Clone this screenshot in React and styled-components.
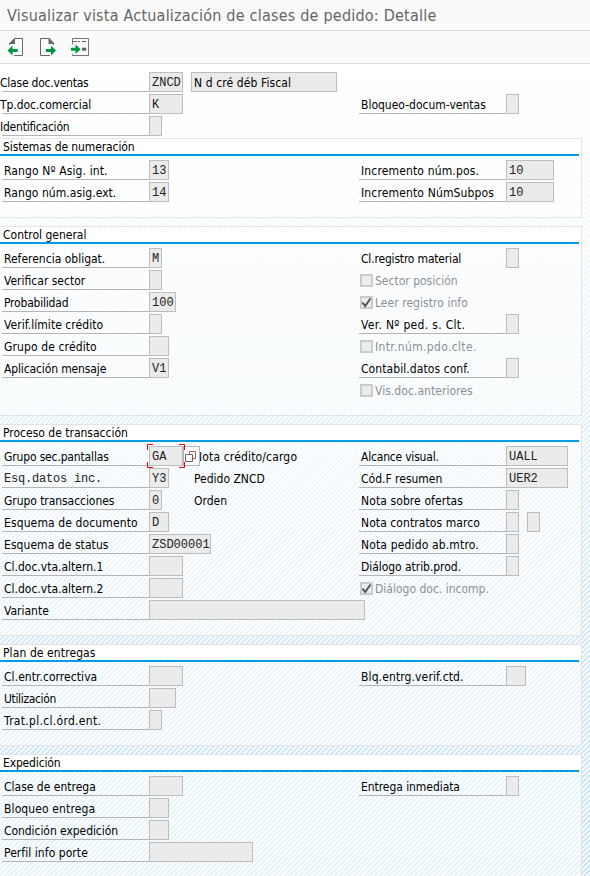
import React from "react";
import styled, { createGlobalStyle, css } from "styled-components";

const Global = createGlobalStyle`
  * { box-sizing: border-box; }
  html, body { margin: 0; padding: 0; }
  body {
    width: 590px;
    height: 876px;
    overflow: hidden;
    background: #fff;
    font-family: "DejaVu Sans Condensed", "DejaVu Sans", sans-serif;
    font-stretch: condensed;
    font-size: 12px;
    color: #000;
  }
`;

const Page = styled.main`
  display: flex;
  flex-direction: column;
  width: 590px;
  height: 876px;
  overflow: hidden;
`;

const TitleBar = styled.h1`
  margin: 0;
  height: 31px;
  padding-left: 7px;
  border-bottom: 1px solid #dcdcdc;
  background: #fafafa;
  color: #666;
  font-size: 16px;
  font-weight: 400;
  line-height: 31px;
  letter-spacing: 0.215px;
  white-space: nowrap;
`;

const Toolbar = styled.nav`
  display: flex;
  flex: none;
  align-items: flex-start;
  gap: 12px;
  height: 33px;
  padding: 6px 0 0 6px;
  border-bottom: 1px solid #dcdcdc;
  background: #fafafa;
`;

const ToolButton = styled.button`
  display: block;
  width: 20px;
  height: 20px;
  padding: 0;
  border: 0;
  background: none;
  svg { display: block; }
`;

const Workspace = styled.section`
  flex: 1;
  min-height: 0;
  padding-top: 8px;
  background:
    linear-gradient(#fff 0%, rgba(255, 255, 255, 0.8) 20%, rgba(255, 255, 255, 0.25) 65%, rgba(255, 255, 255, 0) 100%),
    linear-gradient(135deg, #cde5f5 0 25%, #fff 25% 50%, #cde5f5 50% 75%, #fff 75%) 0 0 / 5px 5px;
`;

const Columns = styled.div`
  display: grid;
  grid-template-columns: 357px 1fr;
  padding-left: 2px;
`;

const HeaderColumns = styled(Columns)`
  height: 66px;
`;

const Group = styled.section`
  width: 582px;
  height: ${(p) => p.$height}px;
  margin-bottom: 8px;
  border: 1px solid #e2e4e5;
  border-left: 0;
  background: rgba(255, 255, 255, 0.55);
`;

const GroupTitle = styled.h2`
  width: 579px;
  height: 17px;
  margin: 0 0 4px;
  padding-left: 3px;
  border-bottom: 2px solid #009de0;
  background: #fff;
  box-shadow: 2px 0 #fff;
  font-size: 12px;
  font-weight: 400;
  line-height: 17px;
  letter-spacing: ${(p) => p.$track || 0}px;
`;

const Row = styled.div`
  display: flex;
  height: 20px;
  margin-bottom: 2px;
  white-space: nowrap;
`;

const Label = styled.span`
  flex: none;
  width: 147px;
  height: 20px;
  padding-left: 2px;
  border-bottom: 1px solid ${(p) => (p.$plain ? "transparent" : "#b5b5b5")};
  line-height: 23px;
  ${(p) => p.$mono && css`
    color: #222;
    font-family: "Liberation Mono", monospace;
    line-height: 22px;
  `}
`;

const LabelText = styled.span`
  display: inline-block;
  margin-left: ${(p) => (p.$outdent ? -p.$outdent : 0)}px;
  letter-spacing: ${(p) => p.$track || 0}px;
`;

const Field = styled.span`
  position: relative;
  flex: none;
  width: ${(p) => p.$width}px;
  height: 20px;
  margin-left: ${(p) => p.$gap || 0}px;
  padding-left: 2px;
  border: 1px solid #bdbdbd;
  background: #ebebeb;
  color: #222;
  font-family: "Liberation Mono", monospace;
  line-height: 20px;
`;

const TextField = styled(Field)`
  color: #000;
  font-family: inherit;
  line-height: 21px;
  letter-spacing: 0.1px;
`;

const Description = styled.span`
  margin-left: ${(p) => p.$gap}px;
  line-height: 23px;
  letter-spacing: ${(p) => p.$track || 0}px;
`;

const FocusCorners = styled.svg`
  position: absolute;
  left: -3px;
  top: -3px;
`;

const MatchButton = styled.button`
  position: absolute;
  left: 33px;
  top: -1px;
  width: 17px;
  height: 20px;
  padding: 0;
  border: 1px solid #b5b5b5;
  background: #f9fbfc;
  svg { display: block; }
`;

const Check = styled.div`
  display: flex;
  align-items: center;
  height: 20px;
  margin-bottom: 2px;
  padding-left: 1px;
  gap: 2px;
  color: #8b9095;
  line-height: 20px;
  letter-spacing: ${(p) => p.$track || 0}px;
  white-space: nowrap;
`;

const CheckText = styled.span`
  padding-top: 2px;
`;

const Box = styled.span`
  width: 13px;
  height: 13px;
  margin-top: 1px;
  border: 2px solid #cbcbcb;
  background: #e9eef1;
  svg { display: block; margin: -1px; }
`;

const Blank = styled.div`
  height: 22px;
`;

function PreviousIcon() {
  return (
    <svg width="20" height="20" viewBox="0 0 20 20" fill="none">
      <path d="M3.5 8V6.5L8.5 1.5H16.5V18.5H8" stroke="#666" />
      <path d="M3 7L9 1V7Z" fill="#666" />
      <path d="M1.5 13.5L6.5 8.5V12H11.7V15H6.5V18.5Z" fill="#009640" />
    </svg>
  );
}

function NextIcon() {
  return (
    <svg width="20" height="20" viewBox="0 0 20 20" fill="none">
      <path d="M12 18.5H2.5V1.5H11.5L15.5 6V8" stroke="#666" />
      <path d="M10.5 1L16 7H10.5Z" fill="#666" />
      <path d="M18 13.5L13 8.5V12H8V15H13V18.5Z" fill="#009640" />
    </svg>
  );
}

function DetailIcon() {
  return (
    <svg width="20" height="20" viewBox="0 0 20 20" fill="none">
      <path d="M2.5 7.5V1.5H18.5V18.5H2.5V17" stroke="#777" />
      <path d="M3 4.5H7M8 4.5H10M12 4.5H16" stroke="#666" />
      <path d="M12 12.2H16.3" stroke="#666" strokeWidth="3" />
      <path d="M1 10.8H5.5V7.5L10.7 12.2L5.5 17V13.7H1Z" fill="#009640" />
    </svg>
  );
}

function Entry({ label, width, value, track, plain, mono, outdent, children }) {
  return (
    <Row>
      <Label $plain={plain} $mono={mono}>
        <LabelText $track={track} $outdent={outdent}>{label}</LabelText>
      </Label>
      <Field $width={width}>{value}</Field>
      {children}
    </Row>
  );
}

function CheckEntry({ label, checked, track }) {
  return (
    <Check $track={track}>
      <Box>
        {checked && (
          <svg width="11" height="11" viewBox="0 0 11 11" fill="none">
            <path d="M1.5 5.5L4.2 9L9.5 1.5" stroke="#555" strokeWidth="2" />
          </svg>
        )}
      </Box>
      <CheckText>{label}</CheckText>
    </Check>
  );
}

function FocusedEntry() {
  return (
    <Row>
      <Label><LabelText $track={-0.15}>Grupo sec.pantallas</LabelText></Label>
      <Field $width={34}>
        GA
        <MatchButton aria-label="Ayuda">
          <svg width="15" height="18" viewBox="0 0 15 18" fill="none">
            <path d="M5.5 7V4.5H11.5V11.5H9" stroke="#b0623c" />
            <path d="M1.5 7.5H8.5V14.5H1.5Z" stroke="#666" fill="#fff" />
          </svg>
        </MatchButton>
        <FocusCorners width="38" height="24" viewBox="0 0 38 24" fill="none" stroke="#e0000c">
          <path d="M.5 6V.5H6M32 .5H37.5V6M.5 18V23.5H6M32 23.5H37.5V18" />
        </FocusCorners>
      </Field>
      <Description $gap={11} $track={0.16}>Nota crédito/cargo</Description>
    </Row>
  );
}

export default function App() {
  return (
    <Page>
      <Global />
      <TitleBar>Visualizar vista Actualización de clases de pedido: Detalle</TitleBar>
      <Toolbar>
        <ToolButton aria-label="Anterior"><PreviousIcon /></ToolButton>
        <ToolButton aria-label="Siguiente"><NextIcon /></ToolButton>
        <ToolButton aria-label="Detalle"><DetailIcon /></ToolButton>
      </Toolbar>
      <Workspace>
        <HeaderColumns>
          <div>
            <Entry outdent={4} track={-0.22} label="Clase doc.ventas" width={34} value="ZNCD">
              <TextField $width={146} $gap={8}>N d cré déb Fiscal</TextField>
            </Entry>
            <Entry outdent={4} track={-0.06} label="Tp.doc.comercial" width={34} value="K" />
            <Entry outdent={4} track={-0.22} label="Identificación" width={13} />
          </div>
          <div>
            <Blank />
            <Entry label="Bloqueo-docum-ventas" width={13} />
          </div>
        </HeaderColumns>

        <Group $height={80}>
          <GroupTitle $track={-0.1}>Sistemas de numeración</GroupTitle>
          <Columns>
            <div>
              <Entry track={0.12} label="Rango Nº Asig. int." width={20} value="13" />
              <Entry track={0.06} label="Rango núm.asig.ext." width={20} value="14" />
            </div>
            <div>
              <Entry track={0.15} label="Incremento núm.pos." width={48} value="10" />
              <Entry track={0.15} label="Incremento NúmSubpos" width={48} value="10" />
            </div>
          </Columns>
        </Group>

        <Group $height={190}>
          <GroupTitle>Control general</GroupTitle>
          <Columns>
            <div>
              <Entry label="Referencia obligat." width={13} value="M" />
              <Entry label="Verificar sector" width={13} />
              <Entry track={-0.2} label="Probabilidad" width={27} value="100" />
              <Entry track={0.05} label="Verif.límite crédito" width={13} />
              <Entry track={0.12} label="Grupo de crédito" width={20} />
              <Entry track={-0.13} label="Aplicación mensaje" width={20} value="V1" />
            </div>
            <div>
              <Entry plain track={-0.18} label="Cl.registro material" width={13} />
              <CheckEntry label="Sector posición" />
              <CheckEntry checked track={0.05} label="Leer registro info" />
              <Entry track={0.32} label="Ver. Nº ped. s. Clt." width={13} />
              <CheckEntry track={0.35} label="Intr.núm.pdo.clte." />
              <Entry track={0.08} label="Contabil.datos conf." width={13} />
              <CheckEntry track={0.05} label="Vis.doc.anteriores" />
            </div>
          </Columns>
        </Group>

        <Group $height={212}>
          <GroupTitle>Proceso de transacción</GroupTitle>
          <Columns>
            <div>
              <FocusedEntry />
              <Entry mono track={-0.2} label="Esq.datos inc." width={20} value="Y3">
                <Description $gap={25}>Pedido ZNCD</Description>
              </Entry>
              <Entry track={-0.06} label="Grupo transacciones" width={13} value="0">
                <Description $gap={32}>Orden</Description>
              </Entry>
              <Entry track={0.12} label="Esquema de documento" width={20} value="D" />
              <Entry track={0.06} label="Esquema de status" width={62} value="ZSD00001" />
              <Entry label="Cl.doc.vta.altern.1" width={34} />
              <Entry label="Cl.doc.vta.altern.2" width={34} />
              <Entry label="Variante" width={216} />
            </div>
            <div>
              <Entry track={-0.2} label="Alcance visual." width={62} value="UALL" />
              <Entry label="Cód.F resumen" width={62} value="UER2" />
              <Entry track={0.1} label="Nota sobre ofertas" width={13} />
              <Entry track={0.08} label="Nota contratos marco" width={13}>
                <Field $width={13} $gap={8} />
              </Entry>
              <Entry track={0.15} label="Nota pedido ab.mtro." width={13} />
              <Entry track={-0.05} label="Diálogo atrib.prod." width={13} />
              <CheckEntry checked label="Diálogo doc. incomp." />
            </div>
          </Columns>
        </Group>

        <Group $height={102}>
          <GroupTitle $track={0.1}>Plan de entregas</GroupTitle>
          <Columns>
            <div>
              <Entry track={0.06} label="Cl.entr.correctiva" width={34} />
              <Entry track={-0.35} label="Utilización" width={27} />
              <Entry track={0.3} label="Trat.pl.cl.órd.ent." width={13} />
            </div>
            <div>
              <Entry track={0.12} label="Blq.entrg.verif.ctd." width={20} />
            </div>
          </Columns>
        </Group>

        <Group $height={140}>
          <GroupTitle $track={-0.15}>Expedición</GroupTitle>
          <Columns>
            <div>
              <Entry label="Clase de entrega" width={34} />
              <Entry track={0.12} label="Bloqueo entrega" width={20} />
              <Entry track={-0.06} label="Condición expedición" width={20} />
              <Entry track={0.06} label="Perfil info porte" width={104} />
            </div>
            <div>
              <Entry track={-0.06} label="Entrega inmediata" width={13} />
            </div>
          </Columns>
        </Group>
      </Workspace>
    </Page>
  );
}
